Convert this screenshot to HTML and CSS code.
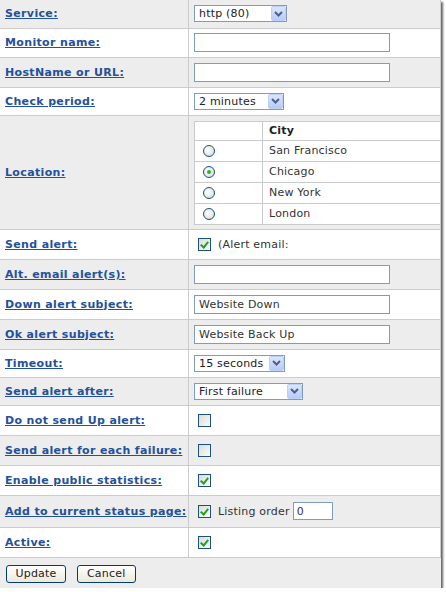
FILE: index.html
```html
<!DOCTYPE html>
<html lang="en">
<head>
    <meta charset="UTF-8">
    <title>Edit Monitor</title>
    <link rel="stylesheet" href="styles.css">
</head>
<body>
    <div class="panel">
        <form id="monitor-form">
            <table class="form-table">
                <tr class="gray h28">
                    <td class="label"><a href="#">Service:</a></td>
                    <td class="field">
                        <span class="select w93">
                            <select><option>http (80)</option></select>
                            <span class="arrow"><svg width="9" height="6" viewBox="0 0 9 6"><path d="M1 1 L4.5 4.5 L8 1" fill="none" stroke="#4d6185" stroke-width="2"/></svg></span>
                        </span>
                    </td>
                </tr>
                <tr class="h29">
                    <td class="label"><a href="#">Monitor name:</a></td>
                    <td class="field"><input type="text" class="text"></td>
                </tr>
                <tr class="gray h30">
                    <td class="label"><a href="#">HostName or URL:</a></td>
                    <td class="field"><input type="text" class="text"></td>
                </tr>
                <tr class="h28">
                    <td class="label"><a href="#">Check period:</a></td>
                    <td class="field">
                        <span class="select w90">
                            <select><option>2 minutes</option></select>
                            <span class="arrow"><svg width="9" height="6" viewBox="0 0 9 6"><path d="M1 1 L4.5 4.5 L8 1" fill="none" stroke="#4d6185" stroke-width="2"/></svg></span>
                        </span>
                    </td>
                </tr>
                <tr class="gray h114">
                    <td class="label"><a href="#">Location:</a></td>
                    <td class="field location">
                        <table class="cities">
                            <tr class="head">
                                <th class="pick"></th>
                                <th>City</th>
                            </tr>
                            <tr>
                                <td class="pick"><span class="radio"></span></td>
                                <td>San Francisco</td>
                            </tr>
                            <tr>
                                <td class="pick"><span class="radio checked"></span></td>
                                <td>Chicago</td>
                            </tr>
                            <tr>
                                <td class="pick"><span class="radio"></span></td>
                                <td>New York</td>
                            </tr>
                            <tr>
                                <td class="pick"><span class="radio"></span></td>
                                <td>London</td>
                            </tr>
                        </table>
                    </td>
                </tr>
                <tr class="h30">
                    <td class="label"><a href="#">Send alert:</a></td>
                    <td class="field"><span class="check checked"></span><span class="note">(Alert email:</span></td>
                </tr>
                <tr class="gray h30">
                    <td class="label"><a href="#">Alt. email alert(s):</a></td>
                    <td class="field"><input type="text" class="text"></td>
                </tr>
                <tr class="h30">
                    <td class="label"><a href="#">Down alert subject:</a></td>
                    <td class="field"><input type="text" class="text" value="Website Down"></td>
                </tr>
                <tr class="gray h30">
                    <td class="label"><a href="#">Ok alert subject:</a></td>
                    <td class="field"><input type="text" class="text" value="Website Back Up"></td>
                </tr>
                <tr class="h28">
                    <td class="label"><a href="#">Timeout:</a></td>
                    <td class="field">
                        <span class="select w91">
                            <select><option>15 seconds</option></select>
                            <span class="arrow"><svg width="9" height="6" viewBox="0 0 9 6"><path d="M1 1 L4.5 4.5 L8 1" fill="none" stroke="#4d6185" stroke-width="2"/></svg></span>
                        </span>
                    </td>
                </tr>
                <tr class="gray h28">
                    <td class="label"><a href="#">Send alert after:</a></td>
                    <td class="field">
                        <span class="select w109">
                            <select><option>First failure</option></select>
                            <span class="arrow"><svg width="9" height="6" viewBox="0 0 9 6"><path d="M1 1 L4.5 4.5 L8 1" fill="none" stroke="#4d6185" stroke-width="2"/></svg></span>
                        </span>
                    </td>
                </tr>
                <tr class="h30">
                    <td class="label"><a href="#">Do not send Up alert:</a></td>
                    <td class="field"><span class="check"></span></td>
                </tr>
                <tr class="gray h30">
                    <td class="label"><a href="#">Send alert for each failure:</a></td>
                    <td class="field"><span class="check"></span></td>
                </tr>
                <tr class="h30">
                    <td class="label"><a href="#">Enable public statistics:</a></td>
                    <td class="field"><span class="check checked"></span></td>
                </tr>
                <tr class="gray h32">
                    <td class="label"><a href="#">Add to current status page:</a></td>
                    <td class="field"><span class="check checked"></span><span class="note">Listing order</span><input type="text" class="order" value="0"></td>
                </tr>
                <tr class="h30">
                    <td class="label"><a href="#">Active:</a></td>
                    <td class="field"><span class="check checked"></span></td>
                </tr>
            </table>
            <div class="actions">
                <button type="submit">Update</button>
                <button type="button" class="cancel">Cancel</button>
            </div>
        </form>
    </div>
</body>
</html>
```

FILE: styles.css
```css
body {
    margin: 0;
    background: #fff;
    font-family: "DejaVu Sans", Verdana, sans-serif;
    font-size: 11px;
    letter-spacing: 0.2px;
    color: #333;
}
.panel {
    width: 441px;
    height: 588px;
    background: #ededed;
    overflow: hidden;
    box-shadow: 2px 2px 2px #666;
}
.form-table {
    width: 441px;
    border-collapse: collapse;
    table-layout: fixed;
}
.form-table > tbody > tr > td {
    border: 1px solid #cbcbcb;
    padding: 0;
    vertical-align: middle;
}
.form-table > tbody > tr > td:first-child {
    border-left: none;
}
.form-table > tbody > tr:first-child > td {
    border-top: none;
}
.form-table tr {
    background: #fff;
}
.form-table tr.gray {
    background: #ededed;
}
.h28 { height: 28px; }
.h29 { height: 29px; }
.h30 { height: 30px; }
.h32 { height: 32px; }
.h114 { height: 114px; }
.label {
    width: 183px;
    padding-left: 5px !important;
    white-space: nowrap;
}
.label a {
    color: #24519c;
    font-weight: bold;
    letter-spacing: 0.35px;
    text-decoration: underline;
}
.field {
    padding-left: 5px !important;
    white-space: nowrap;
}
input.text {
    width: 196px;
    height: 19px;
    box-sizing: border-box;
    border: 1px solid #7f9db9;
    padding: 0 4px;
    font-family: "DejaVu Sans", Verdana, sans-serif;
    font-size: 11px;
    letter-spacing: 0.2px;
    color: #333;
    display: block;
    background: #fff;
}
input.order {
    width: 40px;
    height: 18px;
    box-sizing: border-box;
    border: 1px solid #7f9db9;
    padding: 0 3px;
    font-family: "DejaVu Sans", Verdana, sans-serif;
    font-size: 11px;
    color: #333;
    vertical-align: middle;
    margin-left: 3px;
}
.select {
    position: relative;
    display: inline-block;
    height: 17px;
    vertical-align: middle;
}
.select select {
    appearance: none;
    -webkit-appearance: none;
    width: 100%;
    height: 17px;
    box-sizing: border-box;
    border: 1px solid #7f9db9;
    border-radius: 0;
    padding: 0 0 0 4px;
    background: #fff;
    font-family: "DejaVu Sans", Verdana, sans-serif;
    font-size: 11px;
    letter-spacing: 0.2px;
    color: #222;
    display: block;
}
.w90 { width: 90px; }
.w91 { width: 91px; }
.w93 { width: 93px; }
.w109 { width: 109px; }
.arrow {
    position: absolute;
    right: 1px;
    top: 1px;
    width: 15px;
    height: 15px;
    box-sizing: border-box;
    border: 1px solid #bcd0f6;
    border-radius: 2px;
    background: linear-gradient(#dbe6fd, #b7cbf8);
    display: flex;
    align-items: center;
    justify-content: center;
}
.check {
    display: inline-block;
    position: relative;
    width: 13px;
    height: 13px;
    box-sizing: border-box;
    border: 1px solid #1c5180;
    background: linear-gradient(135deg, #dcdcd5, #fbfbfa);
    margin-left: 4px;
    vertical-align: middle;
}
.check.checked::after {
    content: "";
    position: absolute;
    left: 3px;
    top: 1px;
    width: 3px;
    height: 6px;
    border: solid #21a121;
    border-width: 0 2px 2px 0;
    transform: rotate(40deg);
}
.note {
    margin-left: 7px;
    vertical-align: middle;
}
.location {
    padding-top: 1px !important;
}
.cities {
    width: 260px;
    border-collapse: collapse;
    background: #ededed;
}
.cities th,
.cities td {
    border: 1px solid #cbcbcb;
    text-align: left;
    padding: 0 0 0 6px;
    height: 20px;
    font-weight: normal;
}
.cities .head th {
    height: 18px;
    font-weight: bold;
    color: #222;
}
.cities .pick {
    width: 59px;
    padding-left: 8px;
}
.radio {
    display: inline-block;
    position: relative;
    width: 12px;
    height: 12px;
    box-sizing: border-box;
    border: 1px solid #1c5180;
    border-radius: 50%;
    background: radial-gradient(circle at 40% 40%, #fff, #d4d4cf);
    vertical-align: middle;
}
.radio.checked::after {
    content: "";
    position: absolute;
    left: 3px;
    top: 3px;
    width: 4px;
    height: 4px;
    border-radius: 50%;
    background: #2fb32f;
}
.actions {
    padding: 7px 6px;
}
.actions button {
    width: 60px;
    height: 18px;
    padding: 0;
    border: 1px solid #003c74;
    border-radius: 3px;
    background: linear-gradient(#fff, #ece9d8);
    font-family: "DejaVu Sans", Verdana, sans-serif;
    font-size: 11px;
    letter-spacing: 0.2px;
    color: #222;
    margin-right: 7px;
}
.actions .cancel {
    width: 59px;
}
```
